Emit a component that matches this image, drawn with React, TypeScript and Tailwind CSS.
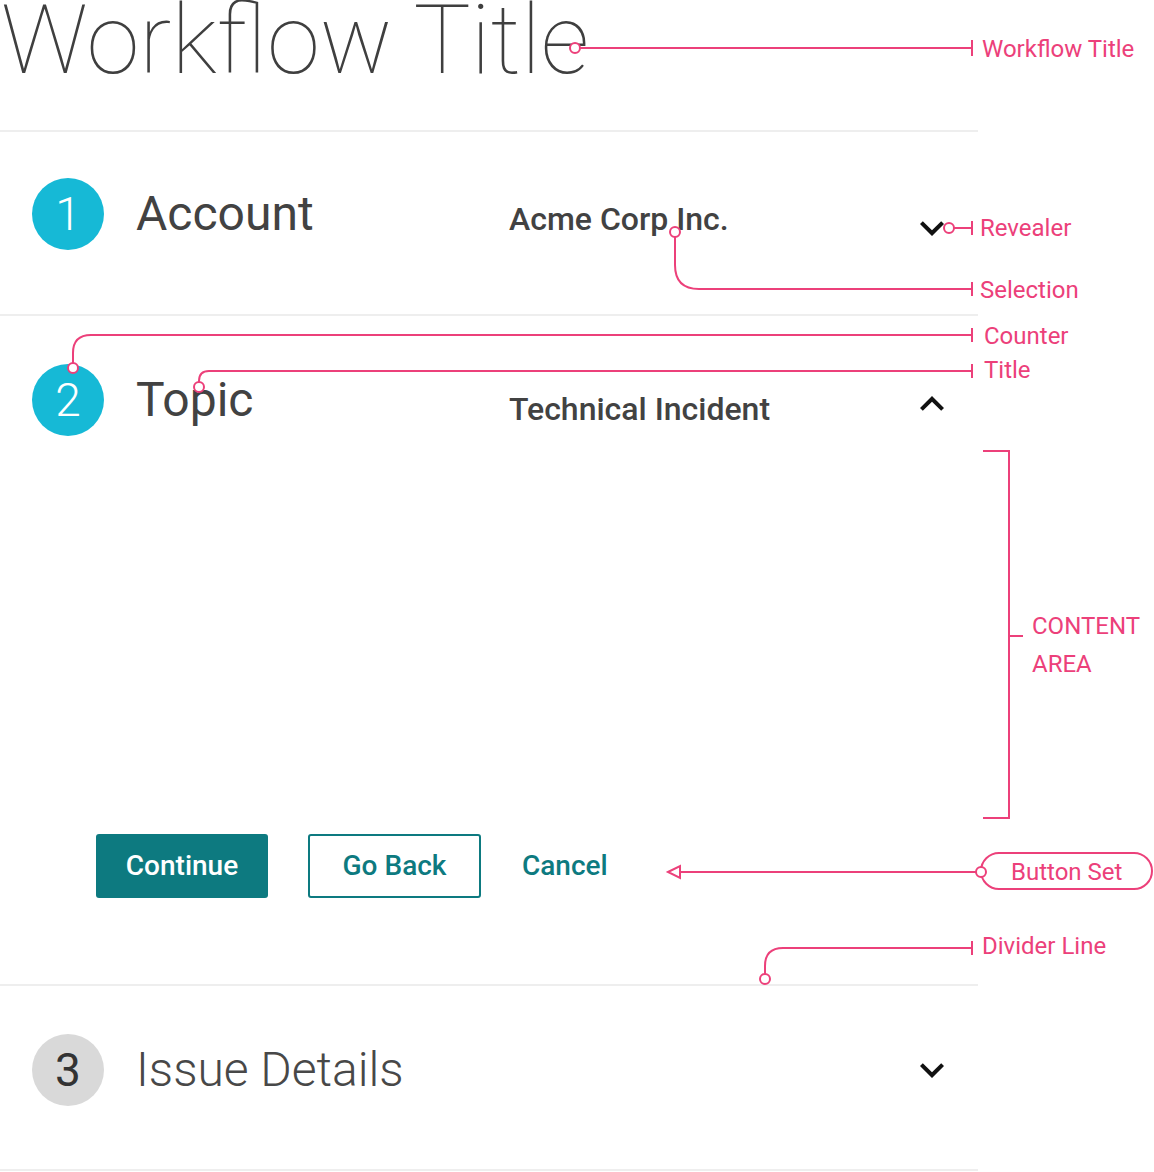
import React from 'react';

const PINK = '#EC407A';

const ChevronDown = () => (
    <svg width="48" height="48" viewBox="0 0 24 24" className="shrink-0">
        <path d="M16.59 8.59L12 13.17 7.41 8.59 6 10l6 6 6-6z" fill="#111" />
    </svg>
);

const ChevronUp = () => (
    <svg width="48" height="48" viewBox="0 0 24 24" className="shrink-0">
        <path d="M7.41 15.41L12 10.83l4.59 4.58L18 14l-6-6-6 6z" fill="#111" />
    </svg>
);

const Counter = ({ n, active }: { n: number; active: boolean }) => (
    <div
        className={
            active
                ? 'w-[72px] h-[72px] rounded-full bg-[#16B9D6] text-white flex items-center justify-center text-[46px] font-light leading-none shrink-0'
                : 'w-[72px] h-[72px] rounded-full bg-[#d9d9d9] text-[#333333] flex items-center justify-center text-[46px] font-normal leading-none shrink-0'
        }
    >
        {n}
    </div>
);

const Label = ({ x, y, children }: { x: number; y: number; children: React.ReactNode }) => (
    <div className="absolute text-[24px] leading-[24px] text-[#EC407A] whitespace-nowrap" style={{ left: x, top: y }}>
        {children}
    </div>
);

// pink call-outs drawn over the workflow
const Annotations = () => (
    <div className="absolute inset-0 pointer-events-none">
        <svg width="1154" height="1172" className="absolute left-0 top-0" fill="none" stroke={PINK} strokeWidth="2">
            {/* workflow title */}
            <path d="M580 48 H972 M972 40 V56" />
            <circle cx="575" cy="48" r="5" fill="#fff" />
            {/* revealer */}
            <path d="M954 228 H972 M972 221 V235" />
            <circle cx="949" cy="228" r="5" fill="#fff" />
            {/* selection */}
            <path d="M675 237 V265 Q675 289 699 289 H972 M972 282 V296" />
            <circle cx="675" cy="232" r="5" fill="#fff" />
            {/* counter */}
            <path d="M73 363 V353 Q73 335 91 335 H972 M972 328 V342" />
            <circle cx="73" cy="368" r="5" fill="#fff" />
            {/* title */}
            <path d="M199 382 V381 Q199 371 209 371 H972 M972 364 V378" />
            <circle cx="199" cy="387" r="5" fill="#fff" />
            {/* content area bracket */}
            <path d="M983 451 H1009 V818 H983 M1009 636 H1023" />
            {/* button set */}
            <path d="M680 872 H976" />
            <path d="M668 872 L680 866 V878 Z" fill="#fff" />
            <rect x="981" y="853" width="171" height="36" rx="18" fill="#fff" />
            <circle cx="981" cy="872" r="5" fill="#fff" />
            {/* divider line */}
            <path d="M765 974 V966 Q765 948 783 948 H972 M972 941 V955" />
            <circle cx="765" cy="979" r="5" fill="#fff" />
        </svg>
        <Label x={982} y={37}>Workflow Title</Label>
        <Label x={980} y={216}>Revealer</Label>
        <Label x={980} y={278}>Selection</Label>
        <Label x={984} y={324}>Counter</Label>
        <Label x={984} y={358}>Title</Label>
        <Label x={1032} y={614}>CONTENT</Label>
        <Label x={1032} y={652}>AREA</Label>
        <Label x={1011} y={860}>Button Set</Label>
        <Label x={982} y={934}>Divider Line</Label>
    </div>
);

export default function App() {
    return (
        <div className="relative w-[1154px] h-[1172px] bg-white overflow-hidden font-['Roboto',sans-serif] text-[#424242]">
            <div className="w-[978px]">
                <div className="h-[132px] border-b-2 border-[#eeeeee]">
                    <h1 className="text-[96px] leading-[80px] font-thin text-[#3f3f3f] pl-[1px]">Workflow Title</h1>
                </div>

                {/* step 1 */}
                <div className="h-[184px] pt-[46px] border-b-2 border-[#eeeeee]">
                    <div className="h-[72px] flex items-center pl-[32px]">
                        <Counter n={1} active />
                        <div className="ml-[32px] w-[373px] text-[48px] leading-none">Account</div>
                        <div className="w-[399px] mt-[10px] text-[32px] leading-none font-medium">Acme Corp Inc.</div>
                        <div className="mt-[28px]"><ChevronDown /></div>
                    </div>
                </div>

                {/* step 2 */}
                <div className="h-[670px] pt-[48px] border-b-2 border-[#eeeeee]">
                    <div className="h-[72px] flex items-center pl-[32px]">
                        <Counter n={2} active />
                        <div className="ml-[32px] w-[373px] text-[48px] leading-none">Topic</div>
                        <div className="w-[399px] mt-[17px] text-[32px] leading-none font-medium">Technical Incident</div>
                        <div className="mt-[8px]"><ChevronUp /></div>
                    </div>
                    <div className="mt-[398px] flex items-center pl-[96px]">
                        <button className="w-[172px] h-[64px] rounded-[3px] bg-[#0D7A80] text-white text-[28px] font-medium">Continue</button>
                        <button className="ml-[40px] w-[173px] h-[64px] rounded-[3px] border-2 border-[#0D7A80] text-[#0D7A80] text-[28px] font-medium">Go Back</button>
                        <button className="ml-[41px] h-[64px] text-[#0D7A80] text-[28px] font-medium">Cancel</button>
                    </div>
                </div>

                {/* step 3 */}
                <div className="h-[185px] pt-[48px] border-b-2 border-[#eeeeee]">
                    <div className="h-[72px] flex items-center pl-[32px]">
                        <Counter n={3} active={false} />
                        <div className="ml-[32px] w-[772px] text-[48px] leading-none font-light text-[#484848]">Issue Details</div>
                        <ChevronDown />
                    </div>
                </div>
            </div>
            <Annotations />
        </div>
    );
}
